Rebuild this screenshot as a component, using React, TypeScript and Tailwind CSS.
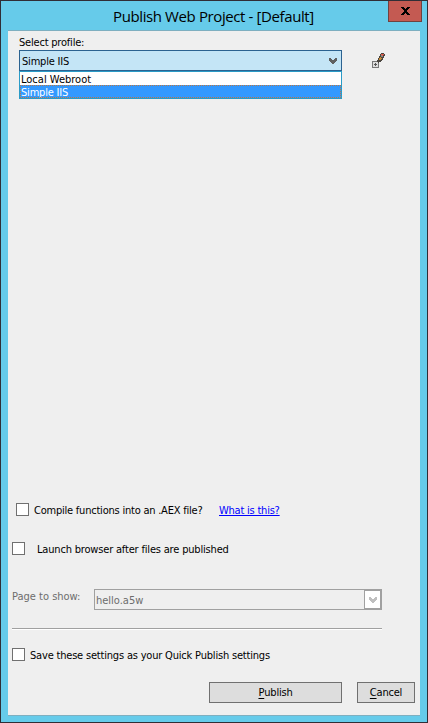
import type { ReactNode } from 'react';

const Box = () => <span className="block h-[13px] w-[13px] shrink-0 border border-[#707070] bg-white" />;

const Chevron = ({ className }: { className: string }) => (
  <svg width="8" height="6" viewBox="0 0 8 6" shapeRendering="crispEdges" className={className}>
    <path fill="currentColor" d="M0 0h2v1h1v1h2v-1h1v-1h2v3h-1v1h-1v1h-1v1h-2v-1h-1v-1h-1v-1h-1z" />
  </svg>
);

const Button = ({ className, children }: { className: string; children: ReactNode }) => (
  <button className={`flex h-[21px] items-center justify-center border border-[#707070] bg-[#dddddd] tracking-[-0.2px] ${className}`}>{children}</button>
);

const PenIcon = () => (
  <svg width="13" height="15" viewBox="0 0 13 15" shapeRendering="crispEdges">
    <path fill="#777777" d="M0 8h7v7h-7z" />
    <path fill="#dedede" d="M1 9h5v5h-5z" />
    <path fill="#555555" d="M3 10h1v1h1v1h-1v1h-1v-1h-1v-1h1z" />
    <path fill="#4a453f" d="M5 9v-2h1v-2h1v-2h1v-2h1v-1h3v1h1v2h-1v2h-1v2h-1v1h-1v1h-2v1h-1z" />
    <path fill="#c78a35" d="M7 5h1v-1h1v1h1v1h-1v1h-2z" />
    <path fill="#888888" d="M8 3h1v-1h1v1h1v1h-2z" />
    <path fill="#e35b4b" d="M9 1h3v1h-1v1h-1v-1h-1z" />
  </svg>
);

export default function App() {
  return (
    <div className="flex h-[723px] w-[428px] flex-col border border-[#302e36] bg-[#66cbea] font-['DejaVu_Sans_Condensed','Noto_Sans',sans-serif] text-[11px] leading-[13px] text-black">
      <header className="flex h-[29px] shrink-0 justify-between">
        <h1 className="ml-[112px] mt-[5px] whitespace-nowrap font-['Open_Sans',sans-serif] text-[15px] leading-5 tracking-[-0.39px]">Publish Web Project - [Default]</h1>
        <button className="mr-[5px] flex h-[21px] w-[34px] items-center justify-center border border-t-0 border-[#70413f] bg-[#c45a52]">
          <svg width="9" height="8" viewBox="0 0 9 8" shapeRendering="crispEdges">
            <path d="M0 0h3v1h1v1h1v-1h1v-1h3v1h-1v1h-1v1h-1v2h1v1h1v1h1v1h-3v-1h-1v-1h-1v1h-1v1h-3v-1h1v-1h1v-1h1v-2h-1v-1h-1v-1h-1z" />
          </svg>
        </button>
      </header>

      <main className="mx-[7px] flex h-[686px] w-[412px] shrink-0 flex-col border-y border-[#7eafc0] bg-[#efefef]">
        <label className="ml-[11px] mt-[5px] h-[14px] whitespace-nowrap tracking-[-0.2px]">Select profile:</label>
        <div className="ml-[11px] flex h-[49px]">
          <div className="w-[323px]">
            <div className="flex h-[21px] items-center justify-between border border-[#2b6290] bg-[#c4e5f6] pl-[2px] pr-1">
              <span className="pt-px tracking-[-0.2px]">Simple IIS</span>
              <Chevron className="mt-px text-[#606060]" />
            </div>
            <ul className="h-[28px] border border-[#2a9bc7] bg-white">
              <li className="h-[13px] pl-px leading-[15px]">Local Webroot</li>
              <li className="h-[13px] bg-[#3399ff] pl-px leading-[15px] tracking-[-0.2px] text-white outline-dotted outline-1 -outline-offset-1 outline-[#b97845]">Simple IIS</li>
            </ul>
          </div>
          <div className="ml-[30px] mt-[3px]"><PenIcon /></div>
        </div>

        <div className="mt-[403px] flex h-[14px] items-center pl-[8px] tracking-[-0.22px]">
          <Box />
          <span className="ml-[5px] mt-[2px] w-[185px] whitespace-nowrap">Compile functions into an .AEX file?</span>
          <a className="mt-[2px] whitespace-nowrap text-[#0000ff] underline">What is this?</a>
        </div>
        <div className="mt-[25px] flex h-[14px] items-center pl-1 tracking-[-0.18px]">
          <Box />
          <span className="ml-[12px] mt-[2px] whitespace-nowrap">Launch browser after files are published</span>
        </div>
        <div className="mt-[34px] flex h-[21px] pl-1 text-[#6d6d6d]">
          <span className="mt-px w-[82px] whitespace-nowrap">Page to show:</span>
          <div className="flex h-[21px] w-[288px] items-center justify-between border border-[#a0a0a0] pl-px">
            <span className="pt-px">hello.a5w</span>
            <span className="flex h-[19px] w-[17px] items-center justify-center border border-[#a0a0a0] bg-white"><Chevron className="text-[#bfbfbf]" /></span>
          </div>
        </div>
        <div className="ml-1 mt-[18px] h-[2px] w-[370px] shrink-0 border-b border-t border-b-white border-t-[#a0a0a0]" />
        <div className="mt-[18px] flex h-[13px] items-center pl-1 tracking-[-0.19px]">
          <Box />
          <span className="ml-[5px] mt-px whitespace-nowrap">Save these settings as your Quick Publish settings</span>
        </div>
        <div className="mt-[21px] flex gap-[15px] pl-[201px]">
          <Button className="w-[133px]"><span className="underline underline-offset-2">P</span>ublish</Button>
          <Button className="w-[58px]"><span className="underline underline-offset-2">C</span>ancel</Button>
        </div>
      </main>
    </div>
  );
}
